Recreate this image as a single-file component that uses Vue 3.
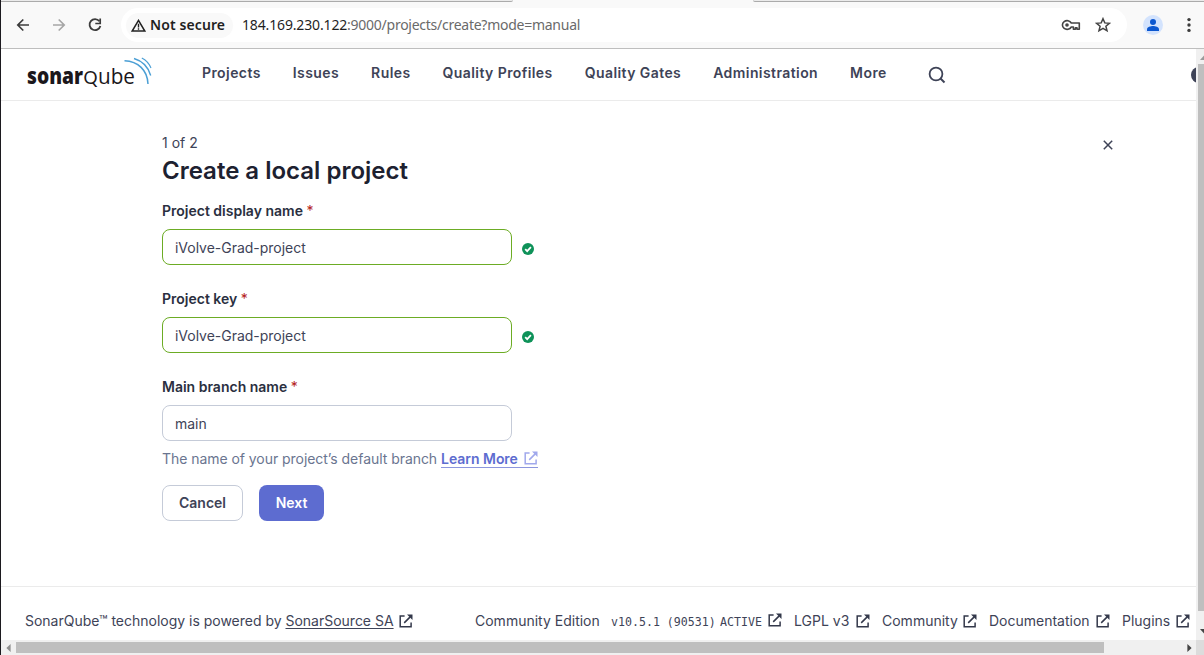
<script setup>
const nav = ['Projects', 'Issues', 'Rules', 'Quality Profiles', 'Quality Gates', 'Administration', 'More']
const fields = [
  { label: 'Project display name', value: 'iVolve-Grad-project', valid: true },
  { label: 'Project key', value: 'iVolve-Grad-project', valid: true },
  { label: 'Main branch name', value: 'main', valid: false },
]
const links = [
  { label: 'LGPL v3', cls: 'lgpl' },
  { label: 'Community', cls: 'community' },
  { label: 'Documentation', cls: 'docs' },
  { label: 'Plugins', cls: 'plugins' },
]
const openPath = 'M5.6 1.9H1.2v10.9h10.9V8.6M5.2 8.9l6-6'
</script>

<template>
  <div class="window">
    <div class="strip">
      <div class="tab-edge left"></div>
      <div class="tab-edge right"></div>
    </div>
    <div class="toolbar">
      <svg class="back" width="14" height="14" viewBox="0 0 14 14"><path d="M13 7H2M7.3 1.5L1.8 7l5.5 5.5" fill="none" stroke="#3c3c3c" stroke-width="1.7" /></svg>
      <svg class="forward" width="14" height="14" viewBox="0 0 14 14"><path d="M1 7h11M6.7 1.5L12.2 7l-5.5 5.5" fill="none" stroke="#a6a6a6" stroke-width="1.7" /></svg>
      <svg class="reload" width="14" height="14" viewBox="0 0 14 14"><path d="M11.4 3.2A5.5 5.5 0 1 0 12.4 8" fill="none" stroke="#3c3c3c" stroke-width="1.8" /><path d="M12.2.6v4.9H7.3" fill="none" stroke="#3c3c3c" stroke-width="1.7" /></svg>
      <div class="omnibox">
        <div class="chip">
          <svg width="15" height="13" viewBox="0 0 15 13"><path d="M7.5 1.4L13.8 12H1.2z" fill="none" stroke="#222" stroke-width="1.5" /><path d="M7.5 4.8v3.6M7.5 9.3v1.4" stroke="#222" stroke-width="1.4" /></svg>
          <span>Not secure</span>
        </div>
        <span class="url"><b>184.169.230.122</b>:9000/projects/create?mode=manual</span>
        <svg class="key" width="20" height="12" viewBox="0 0 20 12"><path d="M10.3 4A4.7 4.4 0 1 0 10.3 8H12.4V10.2H14.4V8.8H16V10.2H18.3V4z" fill="none" stroke="#444" stroke-width="1.6" stroke-linejoin="round" /><circle cx="6" cy="6" r="1.8" fill="#444" /></svg>
        <svg class="star" width="16" height="16" viewBox="0 0 16 16"><path d="M8 1.7l1.8 4.2 4.6.4-3.5 3 1.1 4.5L8 11.4l-4 2.4 1.1-4.5-3.5-3 4.6-.4z" fill="none" stroke="#444" stroke-width="1.5" /></svg>
      </div>
      <svg class="avatar" width="20" height="20" viewBox="0 0 20 20"><circle cx="10" cy="10" r="10" fill="#d3e3fd" /><circle cx="10" cy="7" r="3" fill="#0b57d0" /><path d="M4 16v-1.6c0-2.3 3.6-3.3 6-3.3s6 1 6 3.3V16z" fill="#0b57d0" /></svg>
      <svg class="dots" width="4" height="16" viewBox="0 0 4 16" fill="#3c3c3c"><circle cx="2" cy="2.6" r="1.7" /><circle cx="2" cy="8" r="1.7" /><circle cx="2" cy="13.4" r="1.7" /></svg>
    </div>

    <div class="viewport">
      <div class="page">
        <header>
          <svg class="logo" width="128" height="36" viewBox="0 0 128 36">
            <text x="1" y="28.4" class="logo-bold" textLength="56" lengthAdjust="spacingAndGlyphs">sonar</text>
            <text x="57.5" y="28.2" class="logo-q" textLength="14" lengthAdjust="spacingAndGlyphs">Q</text>
            <text x="72" y="28.4" class="logo-light" textLength="37" lengthAdjust="spacingAndGlyphs">ube</text>
            <g fill="none" stroke="#4b9fd5">
              <path d="M98.5 4.8C112 5.3 121.5 14 122 28" stroke-width="1.5" />
              <path d="M108 2.5C116.5 5 122.2 11 124.7 19.5" stroke-width="1.4" />
              <path d="M115.8 2C120 4.1 123.2 7.7 125 12" stroke-width="1.1" />
            </g>
          </svg>
          <nav>
            <a v-for="n in nav" :key="n">{{ n }}</a>
          </nav>
          <svg class="search" width="18" height="18" viewBox="0 0 18 18"><circle cx="8" cy="8" r="6.4" fill="none" stroke="#3e4357" stroke-width="1.8" /><path d="M12.5 12.5l4 4" stroke="#3e4357" stroke-width="2" /></svg>
          <div class="help"></div>
        </header>

        <main>
          <div class="top">
            <span class="step">1 of 2</span>
            <svg class="close" width="10" height="10" viewBox="0 0 10 10"><path d="M.8.8l8.4 8.4M9.2.8L.8 9.2" stroke="#3e4357" stroke-width="1.5" /></svg>
          </div>
          <h1>Create a local project</h1>
          <div v-for="f in fields" :key="f.label" class="field">
            <label>{{ f.label }} <i>*</i></label>
            <div class="row">
              <div class="input" :class="{ valid: f.valid }">{{ f.value }}</div>
              <svg v-if="f.valid" class="check" width="12" height="12" viewBox="0 0 12 12"><circle cx="6" cy="6" r="6" fill="#0e9259" /><path d="M3.2 6.1l2 2 3.7-3.9" fill="none" stroke="#fff" stroke-width="1.8" /></svg>
            </div>
          </div>
          <p class="hint">
            <span class="desc">The name of your project’s default branch</span>
            <a>Learn More<svg width="14" height="14" viewBox="0 0 14 14"><path :d="openPath" fill="none" stroke="#a0a8ec" stroke-width="1.5" /><path d="M8 .5h5.5V6z" fill="#a0a8ec" /></svg></a>
          </p>
          <div class="buttons">
            <button class="cancel">Cancel</button>
            <button class="next">Next</button>
          </div>
        </main>

        <footer>
          <span class="powered">SonarQube™ technology is powered by <u>SonarSource SA</u></span>
          <svg class="ext" width="14" height="14" viewBox="0 0 14 14"><path :d="openPath" /><path class="tip" d="M8 .5h5.5V6z" /></svg>
          <span class="edition">Community Edition</span>
          <span class="mono">v10.5.1 (90531)</span>
          <span class="mono active">ACTIVE</span>
          <svg class="ext raised" width="14" height="14" viewBox="0 0 14 14"><path :d="openPath" /><path class="tip" d="M8 .5h5.5V6z" /></svg>
          <a v-for="l in links" :key="l.label" class="flink" :class="l.cls">
            <span>{{ l.label }}</span>
            <svg class="ext" width="14" height="14" viewBox="0 0 14 14"><path :d="openPath" /><path class="tip" d="M8 .5h5.5V6z" /></svg>
          </a>
        </footer>
      </div>
      <div class="vbar">
        <svg class="up" width="8" height="5" viewBox="0 0 8 5"><path d="M0 5l4-4.5L8 5z" fill="#9a9a9a" /></svg>
        <div class="vthumb"></div>
        <svg class="down" width="8" height="5" viewBox="0 0 8 5"><path d="M0 0h8L4 4.5z" fill="#444" /></svg>
      </div>
    </div>
    <div class="hbar">
      <svg class="harrow" width="5" height="8" viewBox="0 0 5 8"><path d="M4.6 0v8L.4 4z" fill="#8e8e8e" /></svg>
      <div class="hthumb"></div>
      <svg class="harrow end" width="5" height="8" viewBox="0 0 5 8"><path d="M.4 0v8l4.2-4z" fill="#444" /></svg>
      <div class="corner"></div>
    </div>
  </div>
</template>

<style>
body { margin: 0; overflow: hidden; }
</style>

<style scoped>
* { box-sizing: border-box; }
svg { display: block; flex: none; }
.window { width: 1204px; height: 655px; display: flex; flex-direction: column; border-left: 1px solid #1c1a1f; background: #fff; font-family: Inter, sans-serif; font-size: 14px; color: #3e4357; overflow: hidden; white-space: nowrap; }
.strip { height: 2px; flex: none; background: #f9f9f9; display: flex; justify-content: space-between; }
.tab-edge { background: #ebebeb; border-bottom: 1px solid #ababab; }
.tab-edge.left { width: 512px; border-radius: 0 0 5px 0; }
.tab-edge.right { width: 451px; border-radius: 0 0 0 5px; }
.toolbar { height: 47px; flex: none; background: #f9f9f9; border-bottom: 1px solid #bebebe; display: flex; align-items: center; font-family: "Noto Sans", sans-serif; }
.back { margin-left: 15px; }
.forward { margin-left: 22px; }
.reload { margin-left: 22px; }
.omnibox { width: 1006px; height: 34px; margin-left: 19px; border-radius: 17px; background: #fff; display: flex; align-items: center; }
.chip { width: 107px; height: 25px; margin-left: 5px; padding-left: 5px; border-radius: 13px; background: #f9f9f9; display: flex; align-items: center; color: #1f1f1f; font-size: 14px; font-weight: 600; }
.chip span { margin: -2px 0 0 4px; letter-spacing: 0.1px; }
.url { width: 819px; margin: -2px 0 0 9px; color: #6a6a6a; font-size: 14px; letter-spacing: -0.26px; }
.url b { color: #1f1f1f; font-weight: 400; letter-spacing: -0.15px; }
.star { margin-left: 14px; }
.avatar { margin-left: 16px; }
.dots { margin-left: 24px; }

.viewport { height: 591px; flex: none; display: flex; }
.page { width: 1195px; flex: none; display: flex; flex-direction: column; overflow: hidden; }
header { height: 52px; flex: none; border-bottom: 1px solid #ebebeb; display: flex; align-items: center; }
.logo { margin-left: 25px; margin-top: -2px; }
.logo-bold { font: 800 22.5px "Open Sans", sans-serif; fill: #1b171b; }
.logo-q { font: 400 18px Lato, sans-serif; fill: #1b171b; }
.logo-light { font: 400 22.5px "Open Sans", sans-serif; fill: #1b171b; }
nav { display: flex; gap: 32px; margin-left: 48px; margin-top: -4px; width: 726px; flex: none; font-weight: 600; letter-spacing: 0.42px; }
.search { flex: none; }
.help { width: 16px; height: 16px; flex: none; margin-left: 245px; border-radius: 8px; background: #3e4357; }

main { height: 485px; flex: none; padding: 31px 0 0 161px; }
.top { height: 20px; display: flex; justify-content: space-between; align-items: center; padding-right: 83px; }
.close { margin-top: 5px; }
h1 { margin: 3px 0 0; height: 32px; line-height: 32px; font-size: 24px; font-weight: 600; color: #1d2130; }
.field { height: 72px; margin-top: 16px; }
h1 + .field { margin-top: 14px; }
.field label { display: block; height: 20px; line-height: 20px; font-weight: 600; color: #2a2f40; }
.field i { font-style: normal; font-weight: 400; color: #b4231b; }
.row { display: flex; align-items: center; margin-top: 8px; }
.input { width: 350px; height: 36px; border: 1px solid #c5cbd8; border-radius: 8px; padding-left: 12px; line-height: 35px; letter-spacing: -0.02px; }
.input.valid { border-color: #6cac24; }
.check { margin-left: 10px; margin-top: 4px; }
.hint { display: flex; margin: 0; color: #6a7590; height: 20px; line-height: 20px; }
.desc { letter-spacing: -0.05px; }
.hint a { margin-left: 4px; height: 19px; display: flex; border-bottom: 1px solid #8c96de; color: #5d6cd0; font-weight: 600; letter-spacing: -0.04px; }
.hint a svg { margin: 2px 0 0 6px; }
.buttons { display: flex; gap: 16px; margin-top: 16px; }
button { height: 36px; padding: 0 0 1px; border-radius: 8px; font: 600 14px Inter, sans-serif; }
.cancel { width: 81px; background: #fff; border: 1px solid #c5cbd8; color: #3e4357; }
.next { width: 65px; background: #5d6cd0; border: 0; color: #fff; }

footer { height: 54px; flex: none; border-top: 1px solid #ebebeb; display: flex; align-items: center; padding: 14px 0 0 24px; }
footer u { text-underline-offset: 2px; }
.ext { margin-left: 6px; }
.ext path { fill: none; stroke: #33384a; stroke-width: 1.5; }
.ext .tip { fill: #33384a; stroke: none; }
.powered { width: 368px; letter-spacing: -0.01px; }
.edition { width: 124px; margin-left: 62px; }
.mono { font: 11.6px "DejaVu Sans Mono", monospace; width: 104px; margin: 2px 0 0 12px; }
.mono.active { width: 42px; margin-left: 5px; }
.raised { margin-top: -2px; }
.flink { display: flex; align-items: center; justify-content: space-between; margin-left: 12px; }
.flink .ext { margin-left: 0; }
.lgpl { width: 76px; }
.community { width: 95px; }
.docs { width: 121px; }
.plugins { width: 68px; }

.vbar { width: 8px; flex: none; background: #f0f0f0; display: flex; flex-direction: column; align-items: flex-end; overflow: hidden; }
.up { margin: 6px -4px 4px 0; }
.vthumb { width: 6px; height: 547px; background: #bfbfbf; }
.down { margin: 18px -4px 0 0; }
.hbar { height: 15px; flex: none; background: #f0f0f0; display: flex; align-items: center; }
.harrow { margin-left: 5px; }
.hthumb { width: 1088px; height: 11px; margin-left: 5px; background: #bfbfbf; }
.harrow.end { margin-left: 83px; }
.corner { width: 8px; height: 15px; margin-left: 4px; background: #dcdcdc; }
</style>
